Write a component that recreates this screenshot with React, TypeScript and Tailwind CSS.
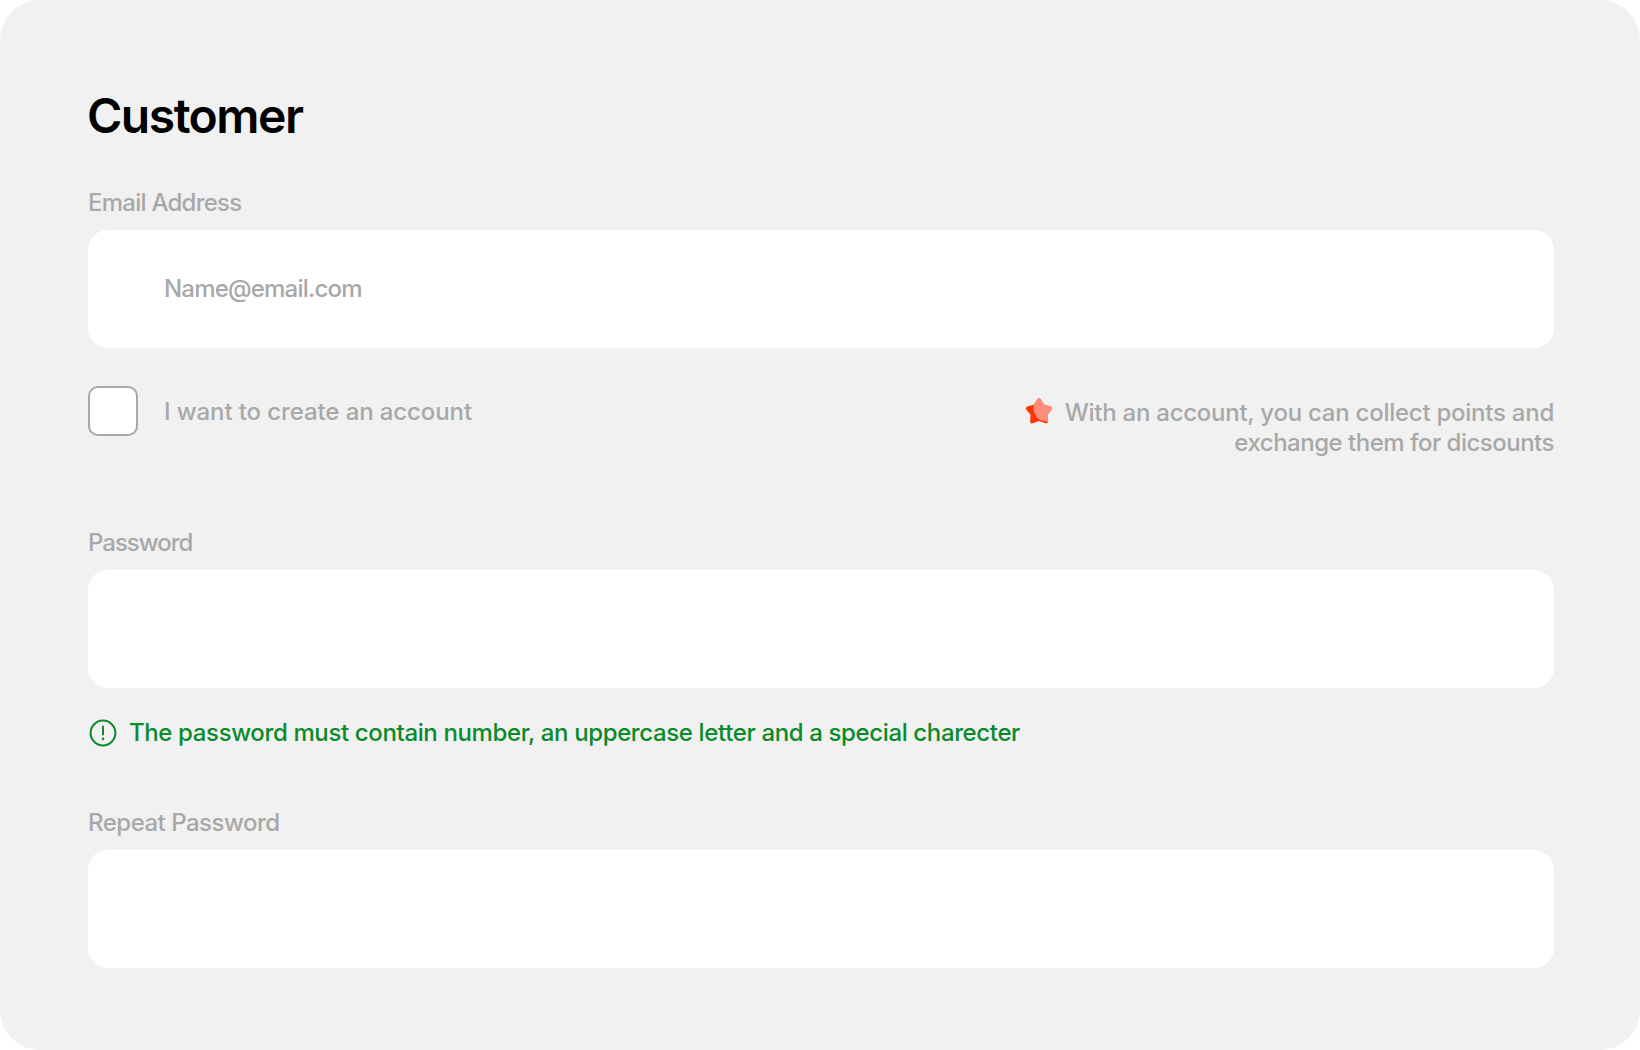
const fieldLabel = "block text-[24px] leading-[30px] font-medium text-[#a8a8a8]";
const fieldBox = "mt-[12px] h-[118px] rounded-[20px] bg-white flex items-center pl-[76px] text-[24px] font-medium text-[#a8a8a8]";

function StarIcon() {
  const points = "14,3 18.1,9.3 25.4,11.3 20.7,17.2 21.1,24.7 14,22 6.9,24.7 7.3,17.2 2.6,11.3 9.9,9.3";
  return (
    <svg width="30" height="30" viewBox="0 0 30 30" className="-mt-[1px] shrink-0">
      <defs>
        <clipPath id="star-light">
          <circle cx="21.5" cy="11.5" r="13" />
        </clipPath>
      </defs>
      <polygon points={points} fill="#ff3300" stroke="#ff3300" strokeWidth="3.5" strokeLinejoin="round" />
      <g clipPath="url(#star-light)">
        <polygon points={points} fill="#ff8f7a" stroke="#ff8f7a" strokeWidth="3.5" strokeLinejoin="round" />
      </g>
    </svg>
  );
}

function AlertIcon() {
  return (
    <svg width="28" height="28" viewBox="0 0 28 28" fill="none" stroke="#0a8a2a" strokeWidth="2" strokeLinecap="round" className="shrink-0">
      <circle cx="14" cy="14" r="12.4" />
      <path d="M14 7.5V15.5" />
      <path d="M14 19.8V20" strokeWidth="2.4" />
    </svg>
  );
}

export default function App() {
  return (
    <div className="h-[1050px] w-[1640px] bg-white font-['Inter','Liberation_Sans',sans-serif]">
      <div className="h-full rounded-[40px] bg-[#f1f1f1] px-[86px] pt-[86px]">
        <h1 className="ml-[1px] text-[48px] leading-[60px] font-semibold text-black tracking-[-1.5px]">Customer</h1>

        <label className="mt-[42px] ml-[2px] block">
          <span className={`${fieldLabel} tracking-[-0.75px]`}>Email Address</span>
          <div className={`${fieldBox} tracking-[-0.8px]`}>Name@email.com</div>
        </label>

        <div className="mt-[38px] ml-[2px] flex items-start justify-between">
          <div className="flex items-center gap-[26px]">
            <div className="h-[50px] w-[50px] rounded-[10px] border-2 border-[#a8a8a8] bg-white" />
            <span className="mt-[2px] text-[24px] font-medium text-[#a8a8a8] tracking-[-0.1px]">I want to create an account</span>
          </div>
          <div className="flex items-start gap-[10px] pt-[12px]">
            <StarIcon />
            <p className="text-right text-[24px] leading-[30px] font-medium text-[#a8a8a8]">
              <span className="tracking-[-0.25px]">With an account, you can collect points and</span>
              <br />
              <span className="tracking-[-0.5px]">exchange them for dicsounts</span>
            </p>
          </div>
        </div>

        <label className="mt-[70px] ml-[2px] block">
          <span className={`${fieldLabel} tracking-[-1px]`}>Password</span>
          <div className={fieldBox} />
        </label>

        <div className="mt-[30px] ml-[3px] flex items-center gap-[12px]">
          <AlertIcon />
          <span className="text-[24px] leading-[30px] font-medium text-[#0a8a2a] tracking-[-0.37px]">
            The password must contain number, an uppercase letter and a special charecter
          </span>
        </div>

        <label className="mt-[60px] ml-[2px] block">
          <span className={`${fieldLabel} tracking-[-0.5px]`}>Repeat Password</span>
          <div className={fieldBox} />
        </label>
      </div>
    </div>
  );
}
